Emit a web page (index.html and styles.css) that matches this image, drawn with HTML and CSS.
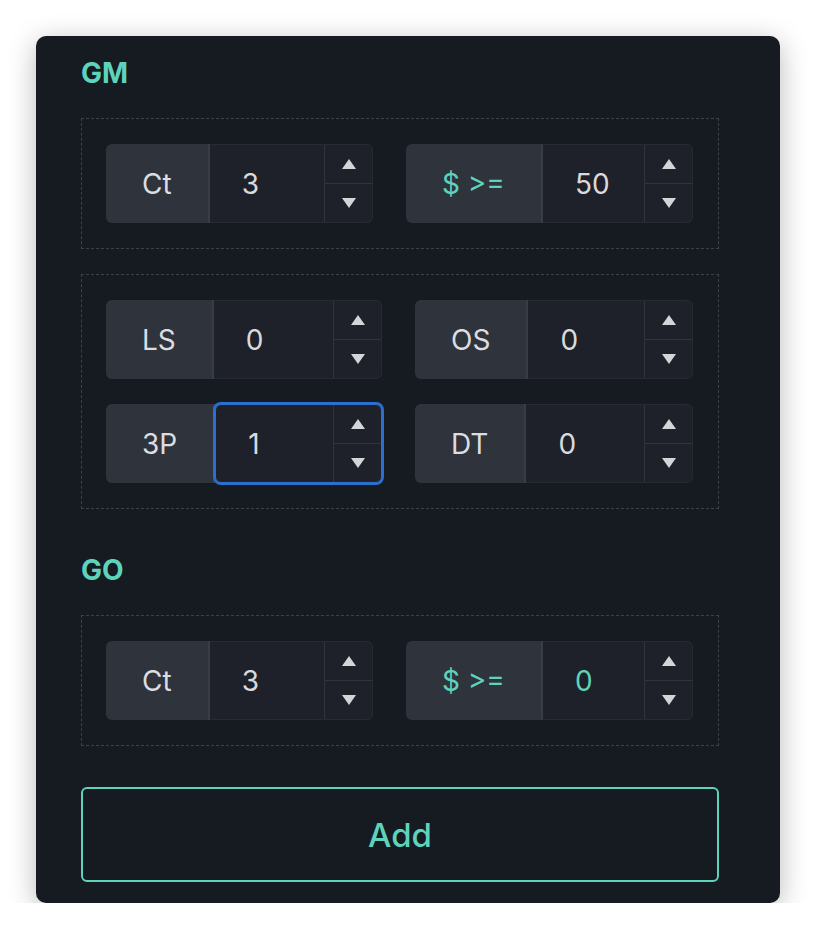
FILE: index.html
```html
<!DOCTYPE html>
<html>
<head>
<meta charset="utf-8">
<link rel="stylesheet" href="styles.css">
</head>
<body>
<div class="card">
  <h2 class="title">GM</h2>
  <div class="box">
    <div class="row row-wide">
      <div class="group">
        <span class="addon">Ct</span>
        <div class="field"><span class="value">3</span>
          <div class="spin"><span class="arrow"><svg width="14" height="10" viewBox="0 0 14 10"><polygon points="7,0 14,10 0,10"/></svg></span><span class="arrow"><svg width="14" height="10" viewBox="0 0 14 10"><polygon points="0,0 14,0 7,10"/></svg></span></div>
        </div>
      </div>
      <div class="group">
        <span class="addon accent">$ &gt;=</span>
        <div class="field"><span class="value">50</span>
          <div class="spin"><span class="arrow"><svg width="14" height="10" viewBox="0 0 14 10"><polygon points="7,0 14,10 0,10"/></svg></span><span class="arrow"><svg width="14" height="10" viewBox="0 0 14 10"><polygon points="0,0 14,0 7,10"/></svg></span></div>
        </div>
      </div>
    </div>
  </div>

  <div class="box box-gap">
    <div class="row row-even">
      <div class="group">
        <span class="addon">LS</span>
        <div class="field"><span class="value">0</span>
          <div class="spin"><span class="arrow"><svg width="14" height="10" viewBox="0 0 14 10"><polygon points="7,0 14,10 0,10"/></svg></span><span class="arrow"><svg width="14" height="10" viewBox="0 0 14 10"><polygon points="0,0 14,0 7,10"/></svg></span></div>
        </div>
      </div>
      <div class="group">
        <span class="addon">OS</span>
        <div class="field"><span class="value">0</span>
          <div class="spin"><span class="arrow"><svg width="14" height="10" viewBox="0 0 14 10"><polygon points="7,0 14,10 0,10"/></svg></span><span class="arrow"><svg width="14" height="10" viewBox="0 0 14 10"><polygon points="0,0 14,0 7,10"/></svg></span></div>
        </div>
      </div>
      <div class="group">
        <span class="addon">3P</span>
        <div class="field focused"><span class="value">1</span>
          <div class="spin"><span class="arrow"><svg width="14" height="10" viewBox="0 0 14 10"><polygon points="7,0 14,10 0,10"/></svg></span><span class="arrow"><svg width="14" height="10" viewBox="0 0 14 10"><polygon points="0,0 14,0 7,10"/></svg></span></div>
        </div>
      </div>
      <div class="group">
        <span class="addon">DT</span>
        <div class="field"><span class="value">0</span>
          <div class="spin"><span class="arrow"><svg width="14" height="10" viewBox="0 0 14 10"><polygon points="7,0 14,10 0,10"/></svg></span><span class="arrow"><svg width="14" height="10" viewBox="0 0 14 10"><polygon points="0,0 14,0 7,10"/></svg></span></div>
        </div>
      </div>
    </div>
  </div>

  <h2 class="title title-second">GO</h2>
  <div class="box">
    <div class="row row-wide">
      <div class="group">
        <span class="addon">Ct</span>
        <div class="field"><span class="value">3</span>
          <div class="spin"><span class="arrow"><svg width="14" height="10" viewBox="0 0 14 10"><polygon points="7,0 14,10 0,10"/></svg></span><span class="arrow"><svg width="14" height="10" viewBox="0 0 14 10"><polygon points="0,0 14,0 7,10"/></svg></span></div>
        </div>
      </div>
      <div class="group">
        <span class="addon accent">$ &gt;=</span>
        <div class="field"><span class="value accent">0</span>
          <div class="spin"><span class="arrow"><svg width="14" height="10" viewBox="0 0 14 10"><polygon points="7,0 14,10 0,10"/></svg></span><span class="arrow"><svg width="14" height="10" viewBox="0 0 14 10"><polygon points="0,0 14,0 7,10"/></svg></span></div>
        </div>
      </div>
    </div>
  </div>

  <button class="add">Add</button>
</div>
</body>
</html>
```

FILE: styles.css
```css
* { box-sizing: border-box; }
html, body { margin: 0; padding: 0; background: #ffffff; }
body { font-family: Inter, "Noto Sans", sans-serif; }

.card {
  margin: 36px 0 0 36px;
  width: 744px;
  height: 867px;
  background: #161a21;
  border-radius: 10px;
  box-shadow: 0 6px 28px rgba(0, 0, 0, 0.28);
  padding: 21px 0 0 45px;
}

.title {
  margin: 0 0 29px 0;
  font-size: 28px;
  line-height: 32px;
  font-weight: 700;
  color: #5ed3bb;
}
.title-second { margin-top: 45px; margin-bottom: 29px; }

.box {
  width: 638px;
  border: 1px dashed #3b4049;
  padding: 25px 24px;
}
.box-gap { margin-top: 25px; }

.row { display: grid; column-gap: 33px; row-gap: 25px; }
.row-wide { grid-template-columns: 267px 287px; column-gap: 33px; }
.row-even { grid-template-columns: 276px 278px; }

.group { display: flex; height: 79px; }

.addon {
  display: flex;
  align-items: center;
  padding: 0 36px;
  background: #2f333c;
  border-radius: 6px 0 0 6px;
  border-right: 2px solid #383c45;
  color: #dcdde0;
  font-size: 28px;
  white-space: nowrap;
}
.accent { color: #5ed3bb; }

.field {
  flex: 1;
  display: flex;
  background: #1e2129;
  border: 1px solid #262a32;
  border-left: none;
  border-radius: 0 6px 6px 0;
}
.field.focused {
  border: 1px solid #2b6fcf;
  border-radius: 6px;
  box-shadow: 0 0 0 2px #2b6fcf;
}

.value {
  flex: 1;
  display: flex;
  align-items: center;
  padding-left: 32px;
  color: #d9dadc;
  font-size: 28px;
}
.value.accent { color: #5ed3bb; }

.spin {
  width: 48px;
  display: flex;
  flex-direction: column;
  border-left: 1px solid #30343c;
}
.arrow {
  flex: 1;
  display: flex;
  align-items: center;
  justify-content: center;
}
.arrow + .arrow { border-top: 1px solid #30343c; }
.arrow svg { fill: #d4d5d8; display: block; }

.add {
  display: block;
  margin-top: 41px;
  width: 638px;
  height: 95px;
  background: transparent;
  border: 2px solid #5ed3bb;
  border-radius: 6px;
  color: #5ed3bb;
  font-family: Inter, "Noto Sans", sans-serif;
  font-size: 33px;
  font-weight: 500;
}
```
